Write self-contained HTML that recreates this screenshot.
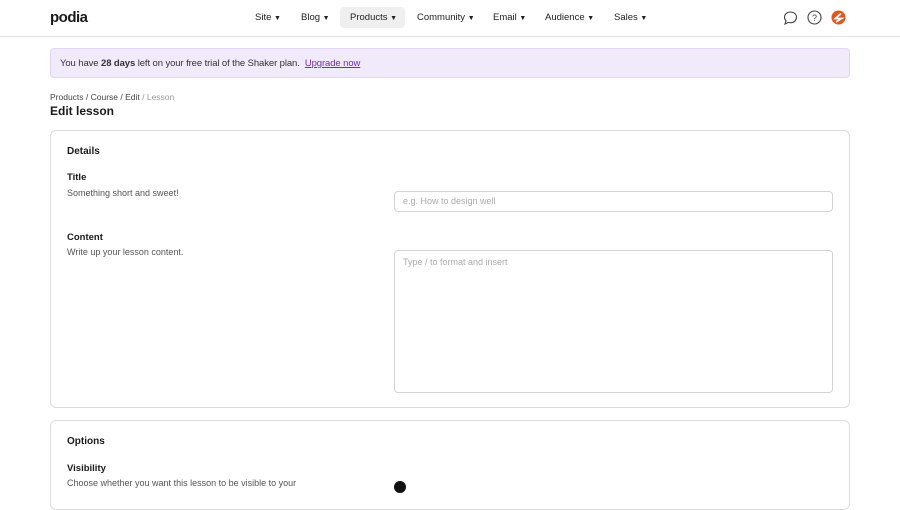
<!DOCTYPE html><html><head><style>
*{box-sizing:border-box}
body{margin:0;width:900px;height:484px;overflow:hidden;background:#fff;font-family:"Liberation Sans",sans-serif;color:#1a1a1a;position:relative}
.a{position:absolute}
.nav{font-size:9.5px;color:#222;top:12px}
.nav span{font-size:7px}
.card{border:1px solid #ddd;border-radius:6px;background:#fff}
.inp{border:1px solid #d4d4d4;border-radius:4px;font-size:9px;color:#aaa}
</style></head><body>
<div class="a" style="left:50px;top:9px;font-size:15px;font-weight:bold;letter-spacing:-0.5px">podia</div>
<div class="a nav" style="left:255px">Site <span>▼</span></div>
<div class="a nav" style="left:301px">Blog <span>▼</span></div>
<div class="a" style="left:340px;top:7px;width:65px;height:21px;background:#efefef;border-radius:4px"></div>
<div class="a nav" style="left:350px">Products <span>▼</span></div>
<div class="a nav" style="left:417px">Community <span>▼</span></div>
<div class="a nav" style="left:493px">Email <span>▼</span></div>
<div class="a nav" style="left:545px">Audience <span>▼</span></div>
<div class="a nav" style="left:614px">Sales <span>▼</span></div>
<svg class="a" style="left:783px;top:11px" width="15" height="14" viewBox="0 0 15 14"><path d="M7.5 1C4 1 1.5 3.3 1.5 6.3c0 1.4.6 2.6 1.5 3.5L2 13l3.3-1.6c.7.2 1.4.3 2.2.3 3.5 0 6-2.3 6-5.4S11 1 7.5 1z" fill="none" stroke="#444" stroke-width="1.1"/></svg>
<svg class="a" style="left:807px;top:10px" width="15" height="15" viewBox="0 0 15 15"><circle cx="7.5" cy="7.5" r="6.5" fill="none" stroke="#444" stroke-width="1.1"/><text x="7.5" y="11" font-size="9" text-anchor="middle" fill="#444" font-family="Liberation Sans">?</text></svg>
<svg class="a" style="left:831px;top:10px" width="15" height="15" viewBox="0 0 15 15"><circle cx="7.5" cy="7.5" r="7" fill="#e0561e"/><path d="M10 3.5L4.5 8.5h6L5 12" fill="none" stroke="#fff" stroke-width="1.8"/></svg>
<div class="a" style="left:0;top:36px;width:900px;height:1px;background:#e4e4e4"></div>
<div class="a" style="left:50px;top:48px;width:800px;height:30px;background:#f1eafa;border:1px solid #e2d6f2;border-radius:4px"></div>
<div class="a" style="left:60px;top:58px;font-size:9.5px;color:#333;letter-spacing:-0.1px">You have <b>28 days</b> left on your free trial of the Shaker plan. &nbsp;<span style="color:#6b2fb3;text-decoration:underline">Upgrade now</span></div>
<div class="a" style="left:50px;top:92px;font-size:8.5px;color:#444">Products / Course / Edit <span style="color:#999">/ Lesson</span></div>
<div class="a" style="left:50px;top:104px;font-size:12px;font-weight:bold">Edit lesson</div>
<div class="a card" style="left:50px;top:130px;width:800px;height:278px"></div>
<div class="a" style="left:67px;top:146px;font-size:10px;font-weight:bold">Details</div>
<div class="a" style="left:67px;top:172px;font-size:9.5px;font-weight:bold">Title</div>
<div class="a" style="left:67px;top:188px;font-size:9px;color:#555">Something short and sweet!</div>
<div class="a inp" style="left:394px;top:191px;width:439px;height:21px;line-height:19px;padding-left:8px">e.g. How to design well</div>
<div class="a" style="left:67px;top:232px;font-size:9.5px;font-weight:bold">Content</div>
<div class="a" style="left:67px;top:247px;font-size:9px;color:#555">Write up your lesson content.</div>
<div class="a inp" style="left:394px;top:250px;width:439px;height:143px;padding:6px 0 0 8px">Type / to format and insert</div>
<div class="a card" style="left:50px;top:420px;width:800px;height:90px"></div>
<div class="a" style="left:67px;top:436px;font-size:10px;font-weight:bold">Options</div>
<div class="a" style="left:67px;top:463px;font-size:9.5px;font-weight:bold">Visibility</div>
<div class="a" style="left:67px;top:478px;font-size:9px;color:#555">Choose whether you want this lesson to be visible to your</div>
<div class="a" style="left:394px;top:481px;width:12px;height:12px;border-radius:6px;background:#111"></div>
</body></html>
